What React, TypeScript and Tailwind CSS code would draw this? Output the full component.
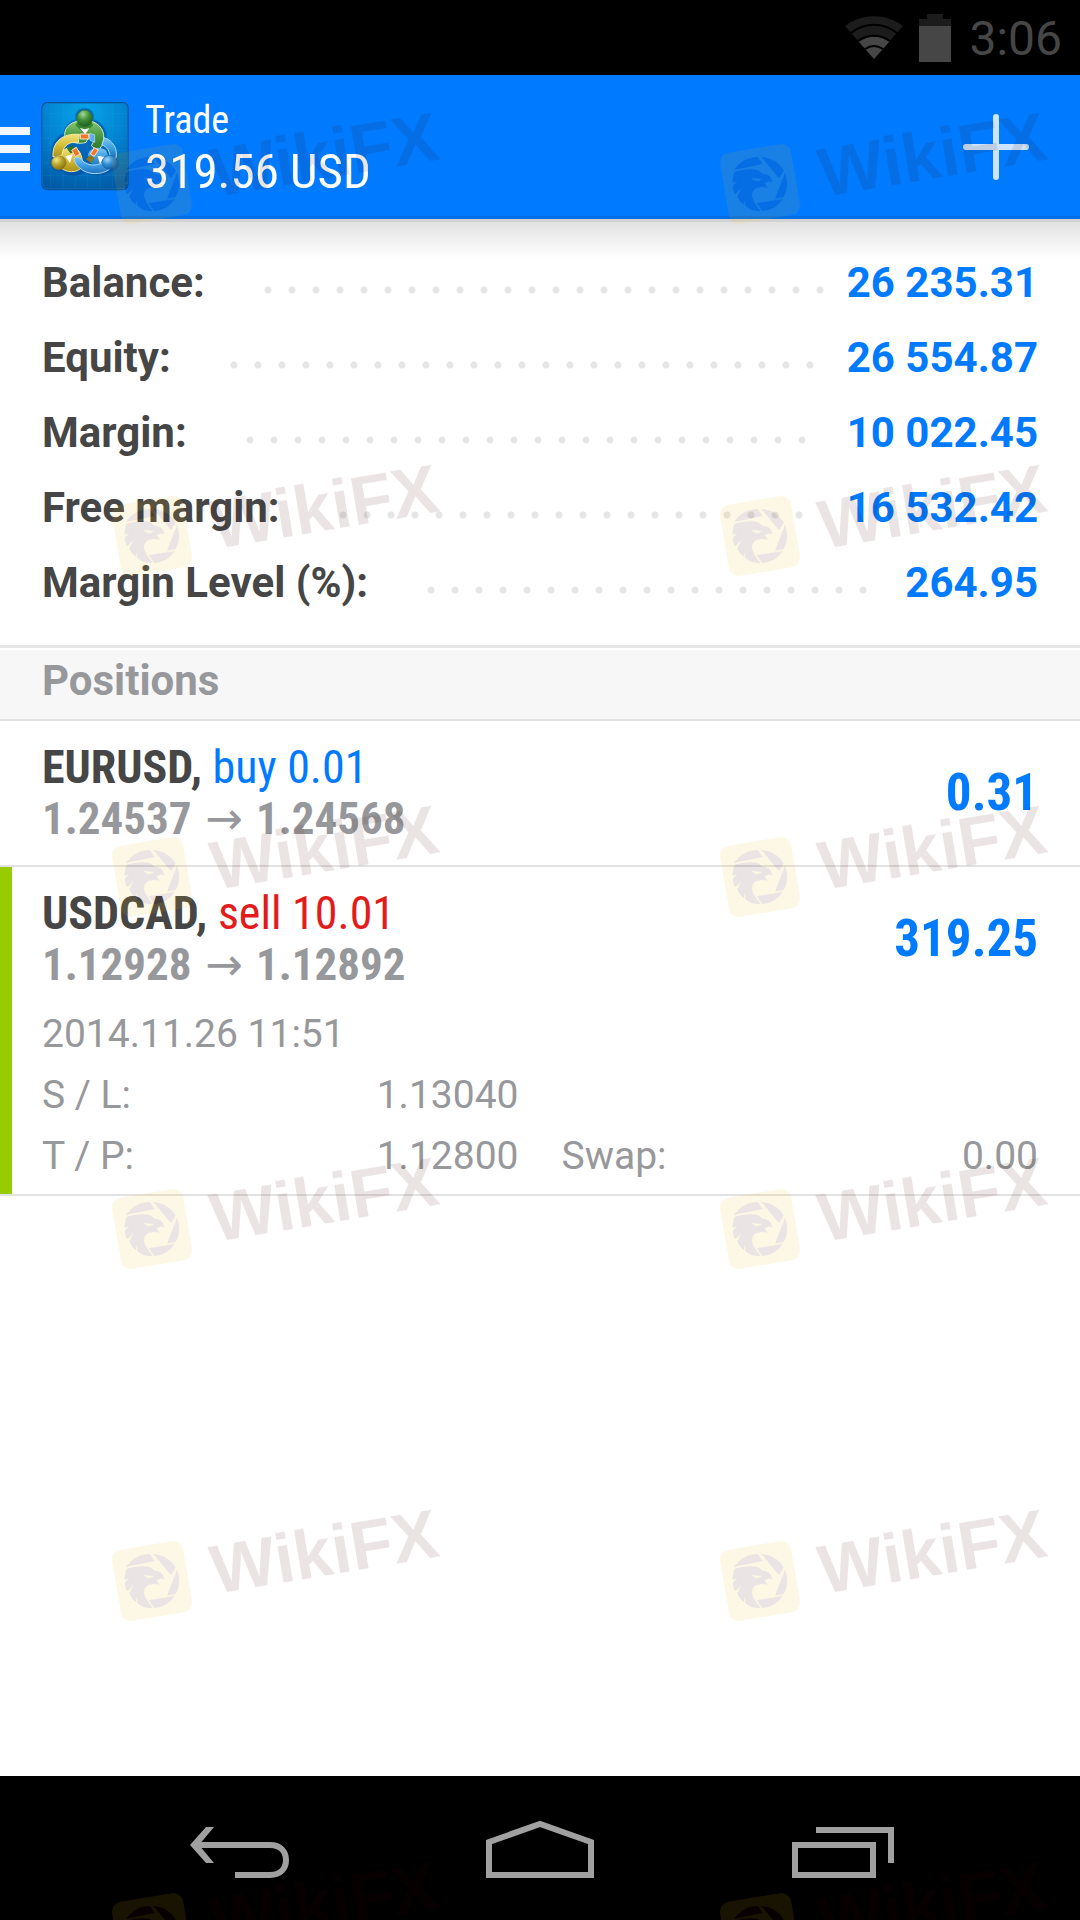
import React from 'react';

const account = [
    { label: 'Balance:', value: '26 235.31' },
    { label: 'Equity:', value: '26 554.87' },
    { label: 'Margin:', value: '10 022.45' },
    { label: 'Free margin:', value: '16 532.42' },
    { label: 'Margin Level (%):', value: '264.95' },
];

const positions = [
    { symbol: 'EURUSD', side: 'buy', volume: '0.01', open: '1.24537', current: '1.24568', profit: '0.31' },
    {
        symbol: 'USDCAD', side: 'sell', volume: '10.01', open: '1.12928', current: '1.12892', profit: '319.25',
        details: { time: '2014.11.26 11:51', sl: '1.13040', tp: '1.12800', swap: '0.00' },
    },
];

const markRows = [93, 445, 786, 1138, 1490, 1842];
const markCols = [90, 698];

const AppLogo = () => (
    <svg viewBox="0 0 294 294" className="size-[98px]" aria-hidden="true">
        <defs>
            <radialGradient id="tile" cx="0.5" cy="0.1" r="0.95">
                <stop offset="0" stopColor="#06a5ea" />
                <stop offset="0.55" stopColor="#0280cf" />
                <stop offset="1" stopColor="#0159a4" />
            </radialGradient>
            <linearGradient id="green" x1="0" y1="0" x2="0" y2="1">
                <stop offset="0" stopColor="#8cc87c" />
                <stop offset="0.5" stopColor="#4a9a3f" />
                <stop offset="1" stopColor="#28702a" />
            </linearGradient>
            <linearGradient id="yellow" x1="0" y1="0" x2="0" y2="1">
                <stop offset="0" stopColor="#f2e27c" />
                <stop offset="0.5" stopColor="#d3bd36" />
                <stop offset="1" stopColor="#a88f1a" />
            </linearGradient>
            <linearGradient id="blue" x1="0" y1="0" x2="0" y2="1">
                <stop offset="0" stopColor="#7cc6f4" />
                <stop offset="0.5" stopColor="#3d9de0" />
                <stop offset="1" stopColor="#1c6fbd" />
            </linearGradient>
            <radialGradient id="greenHead" cx="0.4" cy="0.25" r="0.75">
                <stop offset="0" stopColor="#a5d896" />
                <stop offset="0.5" stopColor="#3f8f38" />
                <stop offset="1" stopColor="#1f5f20" />
            </radialGradient>
            <radialGradient id="yellowHead" cx="0.35" cy="0.3" r="0.75">
                <stop offset="0" stopColor="#f4e98a" />
                <stop offset="0.5" stopColor="#b9a32c" />
                <stop offset="1" stopColor="#85700f" />
            </radialGradient>
            <radialGradient id="blueHead" cx="0.35" cy="0.3" r="0.75">
                <stop offset="0" stopColor="#a0d8fa" />
                <stop offset="0.5" stopColor="#2f8bd0" />
                <stop offset="1" stopColor="#12599f" />
            </radialGradient>
        </defs>
        <rect x="16" y="15" width="262" height="265" rx="18" fill="#044f98" />
        <rect x="20" y="19" width="254" height="256" rx="14" fill="url(#tile)" stroke="#1275bd" strokeWidth="2" />
        <path d="M44 20v254M81 20v254M118 20v254M155 20v254M192 20v254M229 20v254M21 50h252M21 87h252M21 124h252M21 161h252M21 198h252M21 235h252" stroke="#3aaae8" strokeOpacity="0.2" strokeWidth="2" />
        <path d="M146 36C166 36 176 54 168 70C200 74 218 112 204 142C230 146 244 164 242 186C252 204 238 220 222 220C206 236 166 236 146 222C124 238 94 238 80 220C56 222 42 206 48 190C44 150 60 118 86 112C86 92 102 74 124 70C116 52 126 36 146 36z" fill="#0648a0" fillOpacity="0.5" stroke="#0648a0" strokeOpacity="0.4" strokeWidth="8" />
        <path d="M86 116C84 88 110 70 146 70C184 70 206 96 203 124C202 140 196 152 184 162L166 146C176 132 174 118 164 110L150 136C130 142 110 138 96 128z" fill="url(#green)" stroke="#cfe9c2" strokeWidth="3" />
        <path d="M118 84L146 112L172 84L164 74H126z" fill="#3a8835" />
        <path d="M132 93L147 112L161 93L147 97z" fill="#fff" />
        <ellipse cx="146" cy="64" rx="24" ry="25" fill="url(#greenHead)" stroke="#2b6e2a" strokeWidth="2" />
        <path d="M72 184C72 160 96 146 118 154C134 160 142 186 138 210C122 230 92 226 76 214z" fill="url(#yellow)" stroke="#efe38c" strokeWidth="3" />
        <path d="M51 180C48 138 76 108 130 112L127 137C104 132 82 142 78 174z" fill="url(#yellow)" stroke="#f6eda8" strokeWidth="3" />
        <path d="M94 154L110 146L120 160L104 168z" fill="#2c7a2c" stroke="#1b5a1d" strokeWidth="2" />
        <path d="M204 122C232 130 246 158 240 184L222 182C222 162 214 150 198 144z" fill="url(#blue)" stroke="#aadcf8" strokeWidth="3" />
        <path d="M160 110L176 113L176 136L162 130z" fill="#58aeea" stroke="#b5def8" strokeWidth="2" />
        <path d="M156 174C158 154 190 144 210 160L220 186L204 208C176 214 160 200 156 174z" fill="url(#blue)" />
        <path d="M150 186L164 174L176 184L164 198z" fill="#8d7716" />
        <path d="M115 184C124 178 134 182 140 192C160 208 180 206 198 198L222 216C196 236 152 234 130 212C120 202 114 194 115 184z" fill="url(#blue)" stroke="#aadcf8" strokeWidth="3" />
        <path d="M88 178L110 172L102 198z" fill="#fff" />
        <path d="M184 176L206 180L192 200z" fill="#fff" />
        <ellipse cx="68" cy="197" rx="22" ry="21" fill="url(#yellowHead)" stroke="#8b7512" strokeWidth="2" />
        <ellipse cx="221" cy="196" rx="23" ry="21" fill="url(#blueHead)" stroke="#1560a8" strokeWidth="2" />
        <g fill="#f47628" stroke="#ffe6d0" strokeWidth="3">
            <path d="M133 111h25l1 15h-26z" />
            <path d="M107 160l14-9 11 20-14 8z" />
            <path d="M175 152l12 7-12 19-12-7z" />
        </g>
    </svg>
);

// brand mark repeated over the whole screen
const Watermark = () => (
    <svg viewBox="0 0 380 150" className="h-[150px] w-[380px]" aria-hidden="true">
        <g opacity="0.1">
            <rect x="-36" y="-36" width="72" height="72" rx="10" transform="translate(62 91) rotate(-9.500)" fill="#f5b80a" />
            <g fill="#401005" transform="translate(16 45) scale(0.33333)">
                <path d="M66 88C82 68 108 56 132 57L146 78L60 96z" />
                <path d="M142 57C170 58 196 74 209 98L195 121z" />
                <path d="M213 104C224 134 220 160 208 178L183 182z" />
                <path d="M128 195L206 183C192 206 168 218 144 219z" />
                <path d="M62 101C84 96 112 90 134 97C140 104 144 108 154 108C168 112 174 122 175 133C166 130 158 131 152 137L162 149C148 145 132 146 122 154C108 168 112 184 140 219C120 221 104 214 94 204L93 186L90 200C80 194 72 184 70 174L82 152L64 168C58 160 56 152 57 142L70 130L56 134C56 120 58 108 62 101z" />
            </g>
            <path d="M54 85l10 1c-3 3-8 3-10-1z" fill="#f5b80a" />
            <text
                x="125"
                y="104"
                transform="rotate(-9.500 125 104)"
                fill="#401005"
                className="font-['Liberation_Sans',sans-serif] text-[69px] font-bold"
            >
                WikiFX
            </text>
        </g>
    </svg>
);

const StatusBar = () => (
    <div className="flex h-[75px] items-center justify-end bg-black pr-[18px] text-[#464646]">
        <svg viewBox="0 0 58 44" className="mr-4 h-[44px] w-[58px]" aria-label="Wi-Fi">
            <path d="M0 10C17-3 41-3 58 10L29 43z" fill="#1c1c1c" />
            <path d="M14 26C23 19 35 19 44 26L29 43z" fill="#464646" />
            <path d="M6 18C20 7 38 7 52 18M13 26C23 19 35 19 45 26M20 34C26 30 32 30 38 34" transform="translate(0 -1)" fill="none" stroke="#000" strokeWidth="2" />
        </svg>
        <svg viewBox="0 0 32 48" className="mr-[18px] h-[48px] w-[32px]" aria-label="Battery">
            <path d="M8 0h16v5h8v7H0V5h8z" fill="#1c1c1c" />
            <path d="M0 12h32v36H0z" fill="#464646" />
        </svg>
        <span className="pt-[3px] text-[48px] leading-[72px]">3:06</span>
    </div>
);

const Header = () => (
    <header className="relative flex h-[144px] items-center border-b-3 border-[#006ee5] bg-[#007aff] text-white">
        <button aria-label="Menu" className="flex h-full w-[36px] flex-col justify-center gap-[10px] pt-[6px]">
            <span className="h-2 w-[30px] bg-[#f0f7ff]"></span>
            <span className="h-2 w-[30px] bg-[#f0f7ff]"></span>
            <span className="h-2 w-[30px] bg-[#f0f7ff]"></span>
        </button>
        <AppLogo />
        <h1 className="ml-[11px] flex flex-col pt-2 font-['Roboto_Condensed','Roboto',sans-serif]">
            <span className="text-[38px] leading-[44px]">Trade</span>
            <span className="text-[49px] leading-[60px]">319.56 USD</span>
        </h1>
        <button aria-label="New order" className="mr-[51px] ml-auto pt-[2px]">
            <svg viewBox="0 0 66 66" className="size-[66px]">
                <path d="M3 33h60M33 3v60" stroke="#cce4ff" strokeWidth="6" strokeLinecap="round" />
            </svg>
        </button>
        <div className="absolute inset-x-0 top-[144px] h-[39px] border-t-3 border-[#d2d2d2] bg-linear-to-b from-[#e2e2e2] to-white"></div>
    </header>
);

const NavBar = () => (
    <nav className="flex h-[144px] items-center justify-between bg-black px-[87px] pt-[2px] text-[#a0a0a0]">
        <button aria-label="Back" className="flex flex-1 justify-center pl-[2px]">
            <svg viewBox="0 0 99 58" className="h-[58px] w-[99px]" fill="none" stroke="currentColor" strokeWidth="6">
                <path d="M45 55H80C91 55 96 48 96 40S91 25 80 25H6" />
                <path d="M0 25L16 7H24L9 25L24 43H16z" fill="currentColor" stroke="none" />
            </svg>
        </button>
        <button aria-label="Home" className="flex flex-1 justify-center">
            <svg viewBox="0 0 108 58" className="h-[58px] w-[108px]" fill="none" stroke="currentColor" strokeWidth="6">
                <path d="M3 55V22L54 4L105 22V55z" />
            </svg>
        </button>
        <button aria-label="Recent apps" className="flex flex-1 justify-center pl-[2px]">
            <svg viewBox="0 0 102 58" className="h-[58px] w-[102px]" fill="none" stroke="currentColor" strokeWidth="6">
                <path d="M3 25H81V55H3zM24 10H99V43" />
            </svg>
        </button>
    </nav>
);

const App = () => {
    return (
        <div className="relative flex min-h-screen flex-col overflow-hidden bg-white font-['Roboto',sans-serif]">
            <StatusBar />
            <Header />
            <main className="flex-1">
                <dl className="border-b-3 border-[#e5e5e5] pt-[26px] pb-[25px] text-[42px] leading-[75px] font-bold">
                    {account.map((item) => (
                        <div key={item.label} className="flex items-center px-[42px]">
                            <dt className="text-[#464646]">{item.label}</dt>
                            <div className="mr-[14px] ml-[51px] flex-1 pt-[14px]">
                                <div className="h-2 w-[round(down,100%,24px)] bg-[radial-gradient(circle,#e5e5e5_3px,transparent_4px)] bg-[length:24px_8px] bg-repeat-x"></div>
                            </div>
                            <dd className="text-[#007aff]">{item.value}</dd>
                        </div>
                    ))}
                </dl>
                <h2 className="mt-[2px] border-b-2 border-[#e2e2e2] bg-[#f7f7f7] px-[42px] pb-[7px] text-[42px] leading-[62px] font-bold text-[#97989b]">Positions</h2>
                <ul>
                    {positions.map((item) => (
                        <li key={item.symbol} className="border-b-2 border-[#e2e2e2]">
                            <div className={`border-l-12 pr-[42px] pl-[30px] ${item.details ? 'border-[#99cc00] pb-[7px]' : 'border-transparent pb-[21px]'}`}>
                                <div className="flex items-center justify-between pt-[21px] font-['Roboto_Condensed','Roboto',sans-serif] font-bold">
                                    <div className="leading-[51px]">
                                        <p className="text-[46px] text-[#464646]">
                                            {item.symbol},{' '}
                                            <span className={`font-normal ${item.side === 'buy' ? 'text-[#007aff]' : 'text-[#e21b1b]'}`}>
                                                {item.side} {item.volume}
                                            </span>
                                        </p>
                                        <p className="text-[45px] text-[#97989b]">
                                            {item.open} <span className="mx-[3px] font-['DejaVu_Sans',sans-serif] leading-none font-normal">→</span> {item.current}
                                        </p>
                                    </div>
                                    <span className="text-[51px] leading-[60px] text-[#007aff]">{item.profit}</span>
                                </div>
                                {item.details && (
                                    <div className="mt-[14px] text-[39px] leading-[61px] text-[#97989b]">
                                        <p>{item.details.time}</p>
                                        <dl className="grid grid-cols-2 gap-x-[43px]">
                                            <div className="col-start-1 flex justify-between">
                                                <dt>S / L:</dt>
                                                <dd>{item.details.sl}</dd>
                                            </div>
                                            <div className="col-start-1 flex justify-between">
                                                <dt>T / P:</dt>
                                                <dd>{item.details.tp}</dd>
                                            </div>
                                            <div className="flex justify-between">
                                                <dt>Swap:</dt>
                                                <dd>{item.details.swap}</dd>
                                            </div>
                                        </dl>
                                    </div>
                                )}
                            </div>
                        </li>
                    ))}
                </ul>
            </main>
            <NavBar />
            <div className="pointer-events-none absolute inset-0 overflow-hidden">
                {markRows.map((top) =>
                    markCols.map((left) => (
                        <div key={`${top}-${left}`} className="absolute" style={{ top, left }}>
                            <Watermark />
                        </div>
                    ))
                )}
            </div>
        </div>
    );
};

export default App;
